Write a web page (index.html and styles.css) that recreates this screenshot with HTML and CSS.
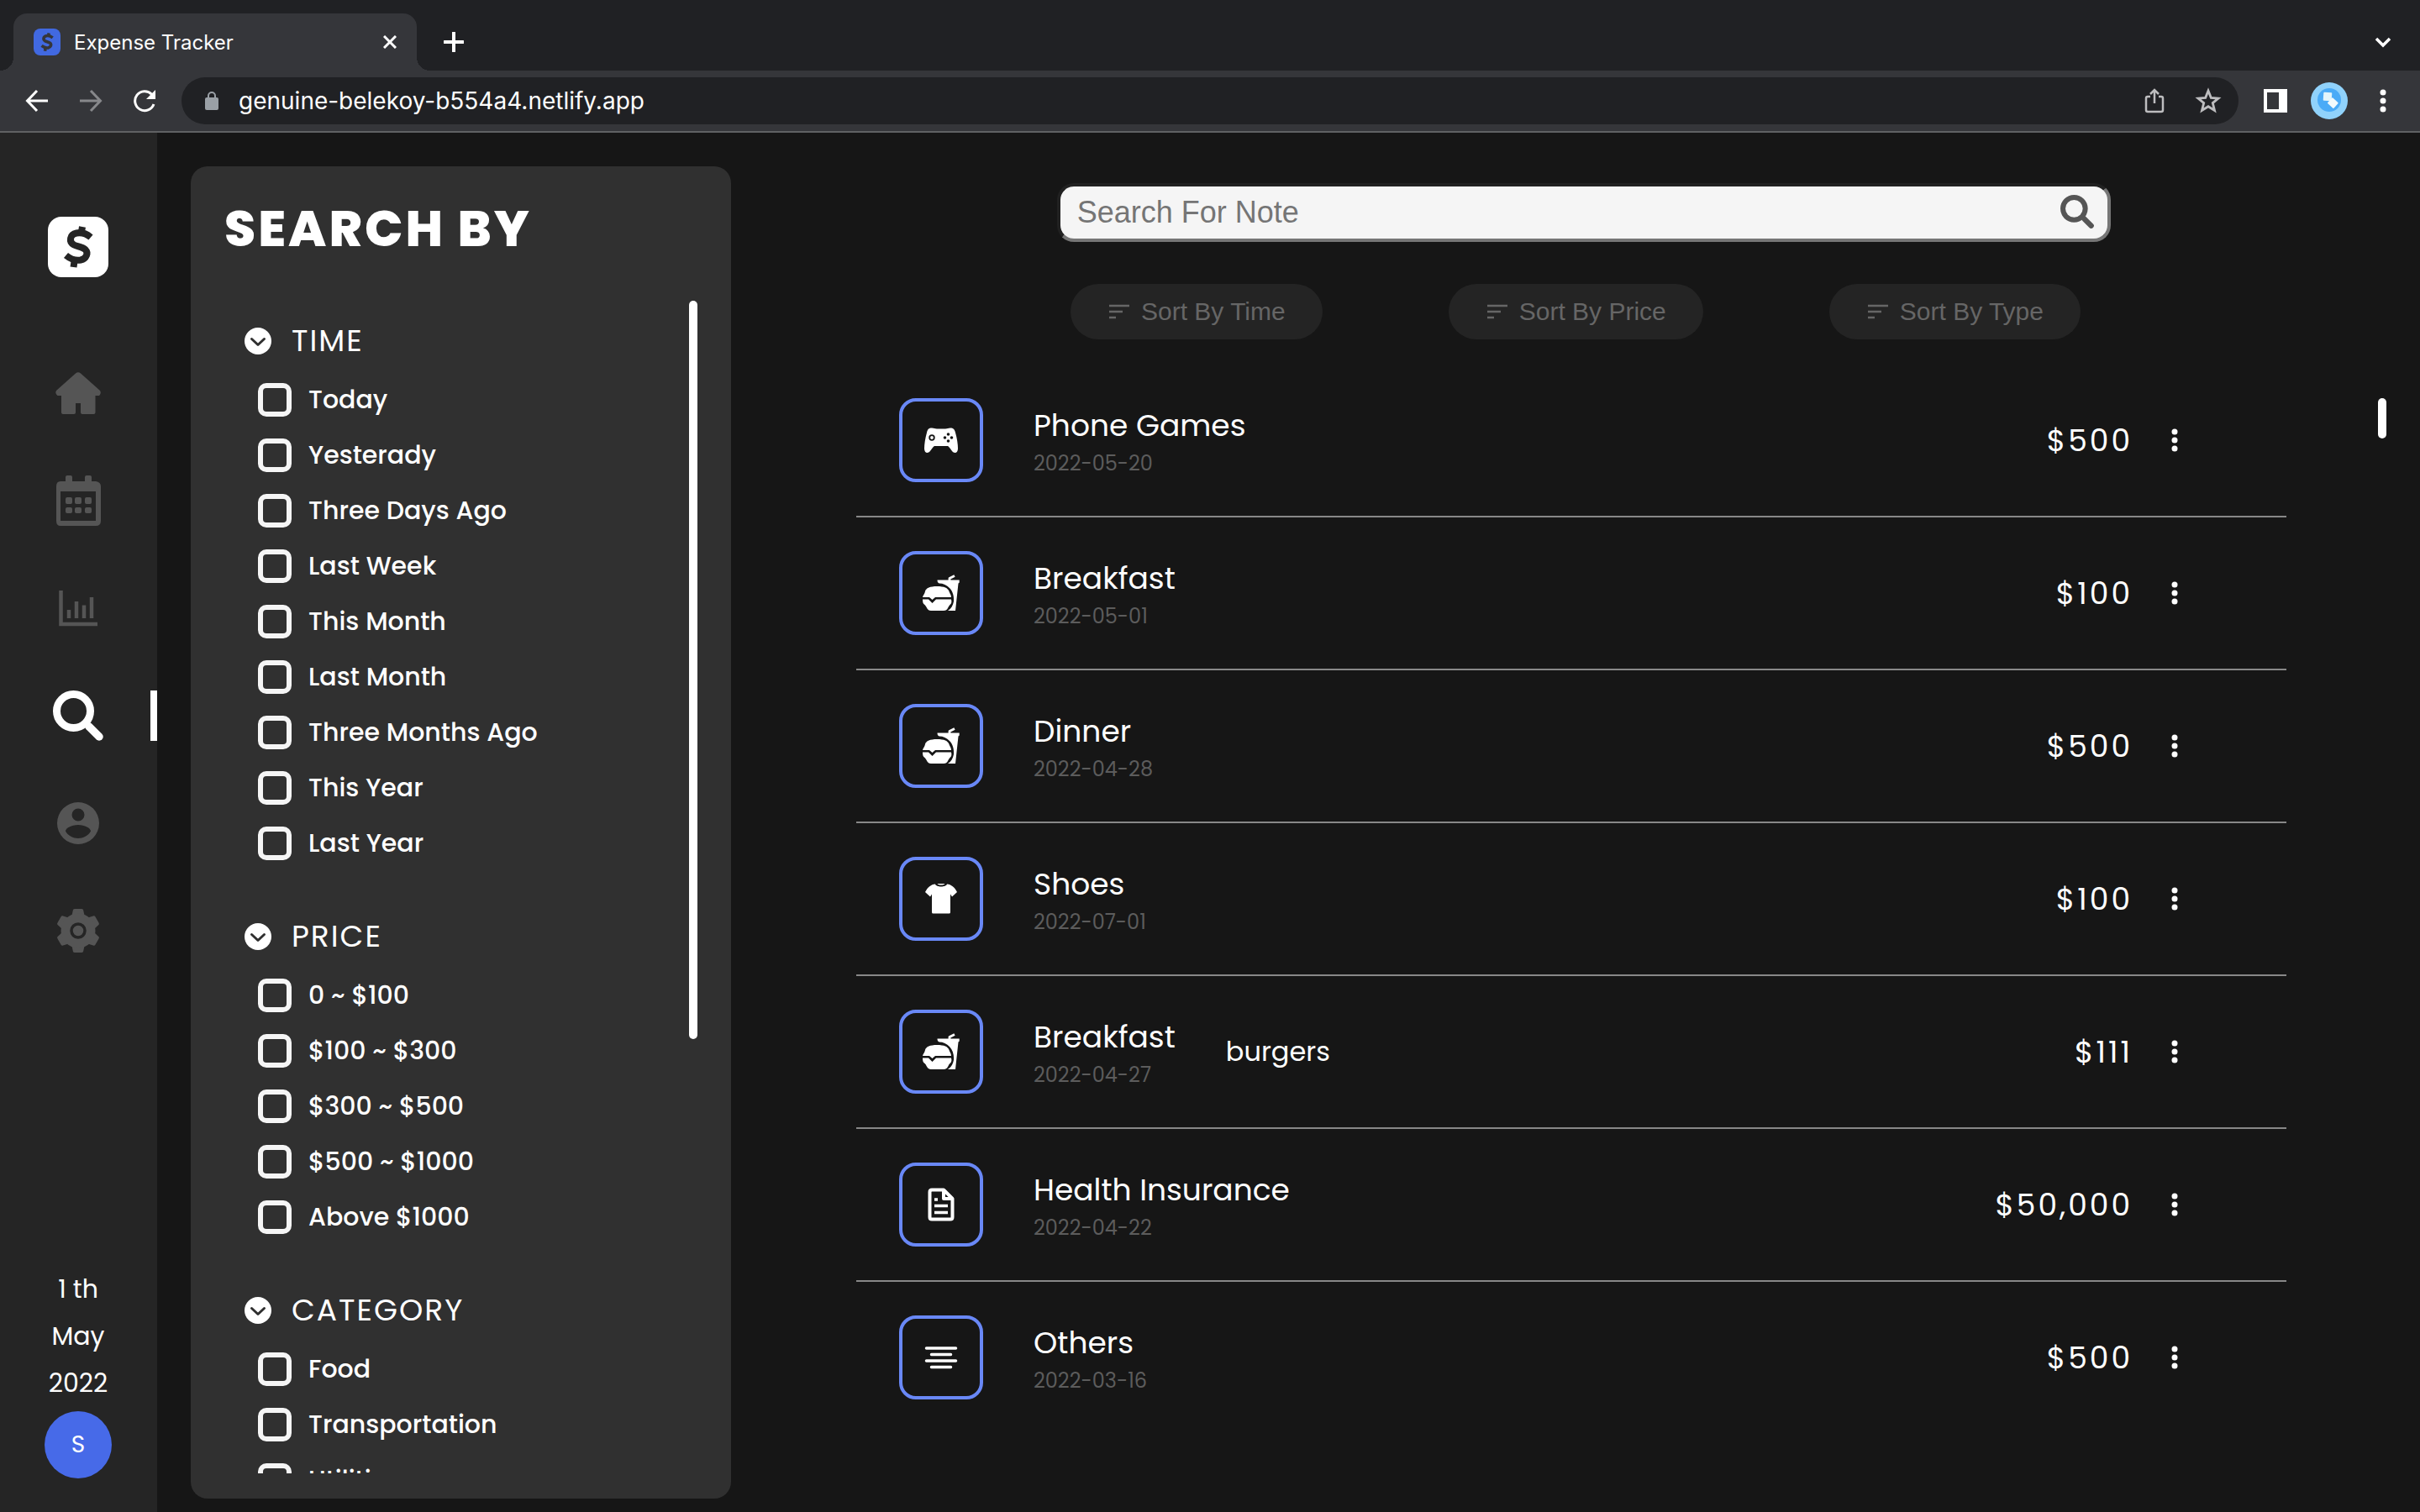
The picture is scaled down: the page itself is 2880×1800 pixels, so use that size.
FILE: index.html
```html
<!DOCTYPE html>
<html lang="en">
<head>
<meta charset="utf-8">
<meta name="viewport" content="width=device-width, initial-scale=1">
<title>Expense Tracker</title>
<link rel="stylesheet" href="styles.css">
</head>
<body>
<svg class="defs" width="0" height="0" aria-hidden="true">
  <symbol id="i-dollar" viewBox="0 0 72 72">
    <path d="M51 24.500C45 19.500 39 18.500 34 19.500C26 21 24.500 30 31 33.500C35 35.500 41 36 44.500 39C48.500 43 46 50 39 51.500C33 52.500 27 50.500 21.500 46" fill="none" stroke="currentColor" stroke-width="8"/>
    <path d="M41 12L39.500 21M32 50L30.500 60" fill="none" stroke="currentColor" stroke-width="8"/>
  </symbol>
  <symbol id="i-search" viewBox="0 0 60 60">
    <circle cx="24.500" cy="24.500" r="20" fill="none" stroke="currentColor" stroke-width="9"/>
    <path d="M43 43L55 55" stroke="currentColor" stroke-width="9.500" stroke-linecap="round"/>
  </symbol>
  <symbol id="i-chevron" viewBox="0 0 32 32">
    <circle cx="16" cy="16" r="16" fill="currentColor"/>
    <path d="M8.500 13.500L16 20.500L23.500 13.500" fill="none" stroke="#303030" stroke-width="3" stroke-linecap="round" stroke-linejoin="round"/>
  </symbol>
  <symbol id="i-sort" viewBox="0 0 24 24">
    <path d="M0 5H24M0 12H16M0 19H8" stroke="currentColor" stroke-width="2.600"/>
  </symbol>
  <symbol id="i-dots" viewBox="0 0 32 32">
    <circle cx="16" cy="6" r="3.500" fill="currentColor"/><circle cx="16" cy="16" r="3.500" fill="currentColor"/><circle cx="16" cy="26" r="3.500" fill="currentColor"/>
  </symbol>
  <symbol id="i-food" viewBox="0 0 44 44">
    <path d="M32 8V4.500L38 1.500" fill="none" stroke="currentColor" stroke-width="2.800" stroke-linejoin="round"/>
    <path fill="currentColor" d="M17.500 6.500H43.700V9.500L42.500 10.500L39 43H30C34 40.500 36 37 37 32C37.500 26 36 20 32 16C29 12.500 24 10.500 20 10.500C18 10 17.500 8.500 17.500 6.500Z"/>
    <path fill="currentColor" d="M0 27C1 23.500 2 24 3 20C4 16 9 14 17 14C26 14 30 16 31.500 20C32.500 23 34 24 34 27H15L11.500 30L8 27Z"/>
    <path fill="currentColor" d="M0 29.500H7L11.500 34L16 29.500H34C35 33 34 35 32.500 36C30 38 30.500 43 25 43H10C5 43 5 38 2.500 36C.5 35 0 33 0 29.500Z"/>
  </symbol>
</svg>

<header class="browser">
  <div class="tabs">
    <div class="tab">
      <span class="tab-logo"><svg viewBox="0 0 72 72"><use href="#i-dollar"/></svg></span>
      <span class="tab-title">Expense Tracker</span>
      <button class="chrome-btn" aria-label="Close tab"><svg class="ic16" viewBox="0 0 16 16"><path d="M1 1L15 15M15 1L1 15" stroke="currentColor" stroke-width="3"/></svg></button>
    </div>
    <button class="chrome-btn new-tab" aria-label="New tab"><svg class="ic24" viewBox="0 0 24 24"><path d="M12 1V23M1 12H23" stroke="currentColor" stroke-width="4" stroke-linecap="round"/></svg></button>
    <button class="chrome-btn tab-list" aria-label="Search tabs"><svg class="ic20" viewBox="0 0 20 20"><path d="M2 6L10 14L18 6" fill="none" stroke="currentColor" stroke-width="3.500"/></svg></button>
  </div>
  <div class="toolbar">
    <div class="nav-btns">
      <button class="chrome-btn" aria-label="Back"><svg class="ic28" viewBox="0 0 28 28"><path d="M27 14H3M14 2L2.500 14L14 26" fill="none" stroke="currentColor" stroke-width="3"/></svg></button>
      <button class="chrome-btn dim" aria-label="Forward"><svg class="ic28" viewBox="0 0 28 28"><path d="M1 14H25M14 2L25.500 14L14 26" fill="none" stroke="currentColor" stroke-width="3"/></svg></button>
      <button class="chrome-btn" aria-label="Reload"><svg class="ic28" viewBox="0 0 28 28"><path d="M25 18A11.500 11.500 0 1 1 22.500 6.200" fill="none" stroke="currentColor" stroke-width="3"/><path d="M27 1V12H16Z" fill="currentColor"/></svg></button>
    </div>
    <div class="omnibox">
      <svg class="lock" viewBox="0 0 16 22"><rect x="0" y="7" width="16" height="15" rx="2" fill="currentColor"/><path d="M4 8V5A4 4 0 0 1 12 5V8" fill="none" stroke="currentColor" stroke-width="2"/></svg>
      <input class="url" type="text" aria-label="Address" value="genuine-belekoy-b554a4.netlify.app">
      <button class="chrome-btn grey" aria-label="Share"><svg class="ic32" viewBox="0 0 32 32"><path d="M11 11H8Q6 11 6 13V27Q6 29 8 29H24Q26 29 26 27V13Q26 11 24 11H21M16 19V4M11 8L16 3L21 8" fill="none" stroke="currentColor" stroke-width="2.500"/></svg></button>
      <button class="chrome-btn grey" aria-label="Bookmark"><svg class="ic32" viewBox="0 0 32 32"><path d="M16 4L19.300 12.300L28 13L21.300 18.600L23.500 27.500L16 22.700L8.500 27.500L10.700 18.600L4 13L12.700 12.300Z" fill="none" stroke="currentColor" stroke-width="2.800"/></svg></button>
    </div>
    <div class="toolbar-end">
      <button class="chrome-btn" aria-label="Side panel"><svg class="ic28" viewBox="0 0 28 28"><path fill="currentColor" fill-rule="evenodd" d="M0 0H28V28H0ZM4 4V24H18V4Z"/></svg></button>
      <button class="chrome-btn" aria-label="Profile"><svg class="ic44" viewBox="0 0 44 44"><circle cx="22" cy="22" r="22" fill="#90d2fb"/><circle cx="22" cy="21" r="14" fill="#4aabf7"/><rect x="15" y="12" width="10" height="10" rx="1" fill="#e2f5fb" transform="rotate(4 20 17)"/><rect x="21" y="20" width="10" height="9" rx="1" fill="#f2fafc" transform="rotate(42 26 25)"/></svg></button>
      <button class="chrome-btn more" aria-label="Menu"><svg class="ic32" viewBox="0 0 32 32"><use href="#i-dots"/></svg></button>
    </div>
  </div>
</header>

<div class="app">
  <aside class="sidebar">
    <a class="logo" href="#" aria-label="Expense Tracker"><svg viewBox="0 0 72 72"><use href="#i-dollar"/></svg></a>
    <nav class="menu">
      <a href="#" aria-label="Home"><svg viewBox="0 0 60 60"><path fill="currentColor" d="M27 6.500Q30 4 33 6.500L56 27Q58 30 55 33H50.500V53Q50.500 55 48.500 55H35Q33 55 33 53V42H27V53Q27 55 25 55H12Q10 55 10 53V33H5.500Q2 30 4 27Z"/></svg></a>
      <a href="#" aria-label="Calendar"><svg viewBox="0 0 60 60"><path fill="currentColor" fill-rule="evenodd" d="M9 7H15V2Q15 0 17 0H21Q23 0 23 2V7H38V2Q38 0 40 0H44Q46 0 46 2V7H51Q57 8 57 13V54Q57 60 51 60H9Q4 60 4 54V13Q4 7 9 7ZM9 19V54H51V19Z"/><g fill="currentColor"><rect x="15" y="26" width="8" height="8" rx="2"/><rect x="26" y="26" width="8" height="8" rx="2"/><rect x="38" y="26" width="8" height="8" rx="2"/><rect x="15" y="38" width="8" height="7" rx="2"/><rect x="26" y="38" width="8" height="7" rx="2"/><rect x="38" y="38" width="8" height="7" rx="2"/></g></svg></a>
      <a href="#" aria-label="Statistics"><svg viewBox="0 0 60 60"><path fill="none" stroke="currentColor" stroke-width="4.500" d="M9.500 9V49H53M19 32V42M28 22V42M37 26.500V42M46 17V42"/></svg></a>
      <a class="active" href="#" aria-label="Search"><svg viewBox="0 0 60 60"><use href="#i-search"/></svg></a>
      <a href="#" aria-label="Account"><svg viewBox="0 0 60 60"><path fill="currentColor" fill-rule="evenodd" d="M30 5A25 25 0 1 1 30 55A25 25 0 1 1 30 5ZM30 12.500A7.500 7.500 0 1 0 30 27.500A7.500 7.500 0 1 0 30 12.500ZM30 32C22 32 15 36 15 39.500C18 45 24 48 30 48C36 48 42 45 45 39.500C45 36 38 32 30 32Z"/></svg></a>
      <a href="#" aria-label="Settings"><svg viewBox="0 0 60 60"><g fill="currentColor"><path id="tooth" d="M22 14L24 5Q24.500 4 26 4H34Q35.500 4 36 5L38 14V46L36 55Q35.500 56 34 56H26Q24.500 56 24 55L22 46Z"/><use href="#tooth" transform="rotate(60 30 30)"/><use href="#tooth" transform="rotate(120 30 30)"/><circle cx="30" cy="30" r="20.500"/></g><circle cx="30" cy="30" r="8" fill="none" stroke="#252525" stroke-width="3.500"/></svg></a>
    </nav>
    <div class="today"><span>1 th</span><span>May</span><span>2022</span></div>
    <button class="avatar">S</button>
  </aside>

  <section class="panel">
    <h1>SEARCH BY</h1>
    <div class="scroller">
      <form class="filters">
        <fieldset>
          <legend><svg class="ic32" viewBox="0 0 32 32"><use href="#i-chevron"/></svg>TIME</legend>
          <label><input type="checkbox">Today</label>
          <label><input type="checkbox">Yesterady</label>
          <label><input type="checkbox">Three Days Ago</label>
          <label><input type="checkbox">Last Week</label>
          <label><input type="checkbox">This Month</label>
          <label><input type="checkbox">Last Month</label>
          <label><input type="checkbox">Three Months Ago</label>
          <label><input type="checkbox">This Year</label>
          <label><input type="checkbox">Last Year</label>
        </fieldset>
        <fieldset>
          <legend><svg class="ic32" viewBox="0 0 32 32"><use href="#i-chevron"/></svg>PRICE</legend>
          <label><input type="checkbox">0 ~ $100</label>
          <label><input type="checkbox">$100 ~ $300</label>
          <label><input type="checkbox">$300 ~ $500</label>
          <label><input type="checkbox">$500 ~ $1000</label>
          <label><input type="checkbox">Above $1000</label>
        </fieldset>
        <fieldset>
          <legend><svg class="ic32" viewBox="0 0 32 32"><use href="#i-chevron"/></svg>CATEGORY</legend>
          <label><input type="checkbox">Food</label>
          <label><input type="checkbox">Transportation</label>
          <label><input type="checkbox">Utilities</label>
        </fieldset>
      </form>
      <div class="track"><div class="thumb" style="height:63%"></div></div>
    </div>
  </section>

  <main class="main">
    <form class="search">
      <input type="text" placeholder="Search For Note" aria-label="Search For Note">
      <button type="button" aria-label="Search"><svg viewBox="0 0 60 60"><use href="#i-search"/></svg></button>
    </form>
    <div class="sorts">
      <button><svg class="ic24" viewBox="0 0 24 24"><use href="#i-sort"/></svg>Sort By Time</button>
      <button><svg class="ic24" viewBox="0 0 24 24"><use href="#i-sort"/></svg>Sort By Price</button>
      <button><svg class="ic24" viewBox="0 0 24 24"><use href="#i-sort"/></svg>Sort By Type</button>
    </div>
    <div class="scroller records">
      <ul class="list">
        <li>
          <span class="kind"><svg viewBox="0 0 44 44"><g transform="translate(2 7)"><path fill="currentColor" d="M9 .5C5 .5 4 2 3 6C1 13 0 20 0 25C0 28 1.500 30 3.500 30C6 30 7.500 27 10 24C11 22.300 12 22 13.500 22H26.500C28 22 29 22.300 30 24C32.500 27 34 30 36.500 30C38.500 30 40 28 40 25C40 20 39 13 37 6C36 2 34.500 .5 31 .5C28 .5 28 1.500 25 1.500H15C12 1.500 12 .5 9 .5Z"/><circle cx="9" cy="12" r="2.800" fill="none" stroke="#161616" stroke-width="1.800"/><g fill="#161616"><circle cx="28.500" cy="8" r="1.800"/><circle cx="28.500" cy="16" r="1.800"/><circle cx="24.500" cy="12" r="1.800"/><circle cx="32.500" cy="12" r="1.800"/></g></g></svg></span>
          <div class="info"><h2>Phone Games</h2><time>2022-05-20</time></div>
          <span class="note"></span><strong>$500</strong>
          <button aria-label="Options"><svg class="ic32" viewBox="0 0 32 32"><use href="#i-dots"/></svg></button>
        </li>
        <li>
          <span class="kind"><svg viewBox="0 0 44 44"><use href="#i-food"/></svg></span>
          <div class="info"><h2>Breakfast</h2><time>2022-05-01</time></div>
          <span class="note"></span><strong>$100</strong>
          <button aria-label="Options"><svg class="ic32" viewBox="0 0 32 32"><use href="#i-dots"/></svg></button>
        </li>
        <li>
          <span class="kind"><svg viewBox="0 0 44 44"><use href="#i-food"/></svg></span>
          <div class="info"><h2>Dinner</h2><time>2022-04-28</time></div>
          <span class="note"></span><strong>$500</strong>
          <button aria-label="Options"><svg class="ic32" viewBox="0 0 32 32"><use href="#i-dots"/></svg></button>
        </li>
        <li>
          <span class="kind"><svg viewBox="0 0 44 44"><path fill="currentColor" d="M15 4.500C16 8.500 28 8.500 29 4.500C34 5 38 8 41 14L35 19.500L33 16.500V38Q33 39.500 31.500 39.500H12.500Q11 39.500 11 38V16.500L9 19.500L3 14C6 8 10 5 15 4.500ZM17.500 4H26.500C25 6 19 6 17.500 4Z"/></svg></span>
          <div class="info"><h2>Shoes</h2><time>2022-07-01</time></div>
          <span class="note"></span><strong>$100</strong>
          <button aria-label="Options"><svg class="ic32" viewBox="0 0 32 32"><use href="#i-dots"/></svg></button>
        </li>
        <li>
          <span class="kind"><svg viewBox="0 0 44 44"><use href="#i-food"/></svg></span>
          <div class="info"><h2>Breakfast</h2><time>2022-04-27</time></div>
          <span class="note">burgers</span><strong>$111</strong>
          <button aria-label="Options"><svg class="ic32" viewBox="0 0 32 32"><use href="#i-dots"/></svg></button>
        </li>
        <li>
          <span class="kind"><svg viewBox="0 0 44 44"><path d="M25 4.500H11Q8.500 4.500 8.500 7V37Q8.500 39.500 11 39.500H33Q35.500 39.500 35.500 37V15ZM25 4.500V15H35.500" fill="none" stroke="currentColor" stroke-width="4" stroke-linejoin="round"/><path d="M14 16H18M14 23.500H30M14 31.500H30" stroke="currentColor" stroke-width="3.500"/></svg></span>
          <div class="info"><h2>Health Insurance</h2><time>2022-04-22</time></div>
          <span class="note"></span><strong>$50,000</strong>
          <button aria-label="Options"><svg class="ic32" viewBox="0 0 32 32"><use href="#i-dots"/></svg></button>
        </li>
        <li>
          <span class="kind"><svg viewBox="0 0 44 44"><path d="M4.500 11H39.500M10.500 18.500H33.500M4.500 26H39.500M10.500 33.500H33.500" stroke="currentColor" stroke-width="3.500" stroke-linecap="round"/></svg></span>
          <div class="info"><h2>Others</h2><time>2022-03-16</time></div>
          <span class="note"></span><strong>$500</strong>
          <button aria-label="Options"><svg class="ic32" viewBox="0 0 32 32"><use href="#i-dots"/></svg></button>
        </li>
      </ul>
      <div class="track"><div class="thumb" style="height:48px"></div></div>
    </div>
  </main>
</div>
</body>
</html>
```
FILE: styles.css
```css
* { box-sizing: border-box; margin: 0; padding: 0; }
body {
  height: 100vh;
  display: flex;
  flex-direction: column;
  overflow: hidden;
  background: #161616;
  color: #fff;
  font-family: Poppins, Inter, "Open Sans", sans-serif;
}
button { border: 0; background: none; color: inherit; font: inherit; display: flex; align-items: center; }
svg { display: block; flex: none; }
.defs { position: absolute; }
.ic16 { width: 16px; height: 16px; }
.ic20 { width: 20px; height: 20px; }
.ic24 { width: 24px; height: 24px; }
.ic28 { width: 28px; height: 28px; }
.ic32 { width: 32px; height: 32px; }
.ic44 { width: 44px; height: 44px; }

/* Browser frame */
.browser { flex: none; background: #35363a; border-bottom: 2px solid #606163; font-family: Inter, sans-serif; }
.tabs { height: 84px; padding: 16px 32px 0 16px; display: flex; align-items: stretch; background: #202124; }
.tab {
  position: relative;
  width: 480px;
  padding: 0 24px;
  display: flex;
  align-items: center;
  gap: 16px;
  background: #35363a;
  border-radius: 16px 16px 0 0;
}
.tab::before, .tab::after {
  content: "";
  position: absolute;
  bottom: 0;
  width: 16px;
  height: 16px;
}
.tab::before { right: 100%; background: radial-gradient(circle at 0 0, #202124 16px, #35363a 16px); }
.tab::after { left: 100%; background: radial-gradient(circle at 100% 0, #202124 16px, #35363a 16px); }
.tab-logo { width: 32px; height: 32px; border-radius: 8px; background: #4169e1; color: #35363a; }
.tab-title { flex: 1; font-size: 24px; }
.new-tab { margin-left: 32px; }
.tab-list { margin-left: auto; padding-right: 2px; }
.toolbar { height: 72px; padding: 8px 30px 8px 28px; display: flex; align-items: center; }
.nav-btns { display: flex; gap: 36px; padding: 0 30px 0 2px; }
.dim { color: #87888b; }
.grey { color: #bdbdbf; }
.omnibox { flex: 1; height: 56px; padding: 0 20px 0 28px; border-radius: 28px; background: #202124; display: flex; align-items: center; gap: 32px; }
.lock { width: 16px; height: 22px; color: #9aa0a6; }
.url { flex: 1; margin-left: -8px; border: 0; background: none; color: #fff; font: 28px Inter, sans-serif; }
.toolbar-end { display: flex; align-items: center; gap: 28px; padding-left: 30px; }
.more { margin: 0 -2px; }

/* Sidebar */
.app { flex: 1; min-height: 0; display: flex; }
.sidebar { flex: none; width: 187px; padding: 100px 0 40px; display: flex; flex-direction: column; align-items: center; border-right: 1px solid #252525; background: #252525; }
.logo { width: 72px; height: 72px; border-radius: 16px; background: #fff; color: #252525; }
.menu { width: 100%; margin-top: 108px; display: flex; flex-direction: column; gap: 68px; }
.menu a { position: relative; height: 60px; display: flex; justify-content: center; color: #555; }
.menu svg { width: 60px; height: 60px; }
.menu .active { color: #fff; }
.menu .active::after { content: ""; position: absolute; right: -1px; top: 0; width: 8px; height: 60px; background: #fff; }
.today { margin-top: auto; display: flex; flex-direction: column; align-items: center; font-size: 30px; line-height: 56px; }
.avatar { width: 80px; height: 80px; margin-top: 5px; border-radius: 50%; justify-content: center; background: #476ae8; font-size: 28px; }

/* Filter panel */
.panel { flex: none; width: 643px; margin: 40px 0 16px 40px; padding: 40px 40px 30px; display: flex; flex-direction: column; border-radius: 20px; background: #303030; }
.panel h1 { font-size: 60px; line-height: 68px; font-weight: 800; letter-spacing: 3px; }
.scroller { flex: 1; min-height: 0; display: flex; }
.panel .scroller { margin-top: 52px; }
.track { flex: none; width: 10px; }
.thumb { border-radius: 5px; background: #fff; }
.filters { flex: 1; overflow: hidden; padding: 22px 0 0 24px; display: flex; flex-direction: column; gap: 65px; }
fieldset { flex: none; border: 0; display: flex; flex-direction: column; gap: 26px; }
legend { display: flex; align-items: center; gap: 24px; margin-bottom: 24px; font-size: 36px; line-height: 52px; letter-spacing: 2px; }
.filters label { display: flex; align-items: center; gap: 20px; height: 40px; padding-left: 16px; font-size: 30px; font-weight: 500; }
.filters input { appearance: none; width: 40px; height: 40px; border: 6px solid #f5f5f5; border-radius: 10px; }

/* Records */
.main { flex: 1; min-width: 0; padding: 60px 40px 16px; display: flex; flex-direction: column; align-items: center; }
.search { position: relative; width: 65%; margin-left: 20px; }
.search input {
  display: block;
  width: 100%;
  height: 70px;
  padding: 0 80px 0 20px;
  border: 4px solid;
  border-color: #212121 #767676 #767676 #212121;
  border-radius: 20px;
  background: #f5f5f5;
  color: #222;
  font: 36px "Liberation Sans", Arial, sans-serif;
}
.search input::placeholder { color: #757575; opacity: 1; }
.search button { position: absolute; right: 20px; top: 14px; color: #555; }
.search svg { width: 40px; height: 40px; }
.sorts { margin-top: 50px; display: flex; gap: 150px; }
.sorts button { height: 66px; padding: 0 44px 0 46px; gap: 14px; border-radius: 33px; background: #242424; color: #666; font: 30px "Liberation Sans", Arial, sans-serif; }
.records { width: 100%; margin-top: 70px; }
.list { flex: 1; list-style: none; padding: 0 109px; }
.list li { display: flex; align-items: center; padding: 40px 117px 40px 51px; border-bottom: 2px solid #888; }
.list li:first-child { padding-top: 0; }
.list li:last-child { border-bottom: 0; }
.kind { width: 100px; height: 100px; display: grid; place-items: center; border: 4px solid #6988f7; border-radius: 20px; }
.kind svg { width: 44px; height: 44px; }
.info { margin-left: 60px; padding-top: 4px; }
.info h2 { font-size: 36px; line-height: 52px; font-weight: 400; }
.info time { display: block; font-size: 24px; line-height: 38px; color: #5c5c5c; }
.note { flex: 1; padding-left: 60px; font-size: 32px; }
.list strong { margin-right: 34px; font-size: 36px; font-weight: 400; letter-spacing: 3px; }
```
